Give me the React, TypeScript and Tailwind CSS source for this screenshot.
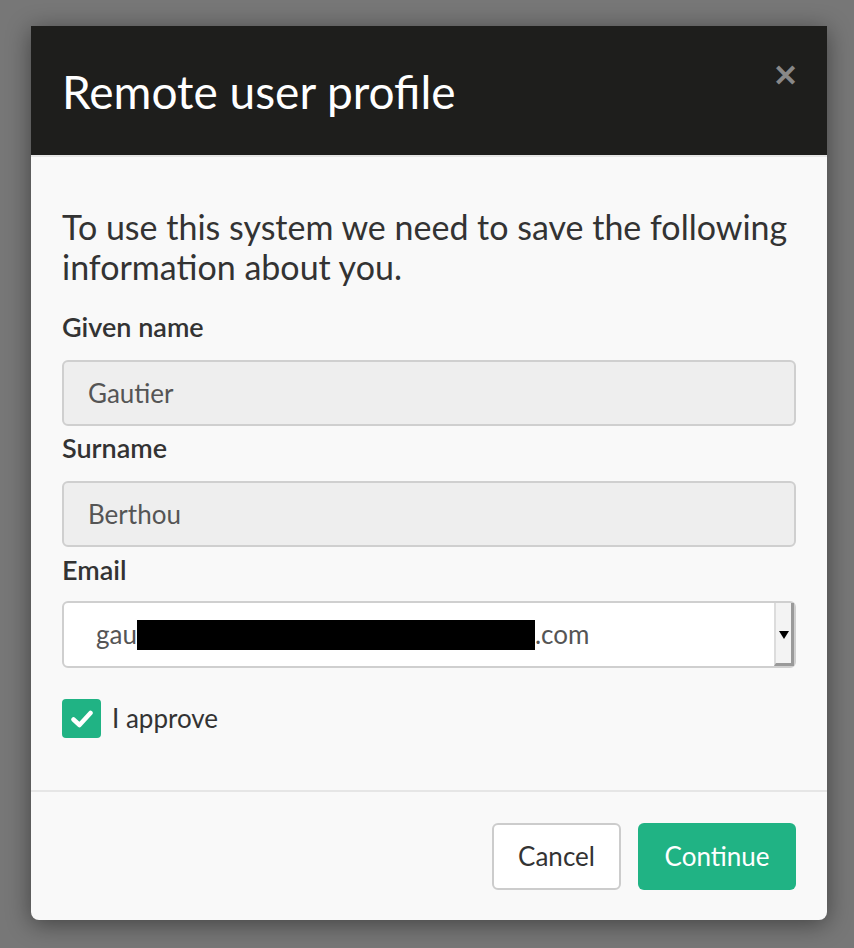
const font = { fontFamily: "Lato, 'Noto Sans', sans-serif" }

const Field = ({ label, value }: { label: string; value: string }) => {
  return (
    <div className="flex flex-col">
      <label className="text-[27px] leading-[32px] font-semibold text-[#333] mb-[17px]">{label}</label>
      <div className="h-[66px] rounded-[6px] border-2 border-[#cfcfcf] bg-[#eeeeee] flex items-center px-[24px] text-[26px] text-[#555]">
        {value}
      </div>
    </div>
  )
}

export default function App() {
  return (
    <div className="min-h-screen bg-[#777777] pt-[26px] pl-[31px]" style={font}>
      <div className="w-[796px] h-[894px] bg-[#f9f9f9] rounded-b-[8px] shadow-[0_4px_24px_rgba(0,0,0,0.45)] flex flex-col">
        <header className="h-[131px] bg-[#1e1e1c] flex items-center justify-between px-[31px] border-b-2 border-[#e6e6e6]">
          <h1 className="text-[46px] text-white font-normal pt-[2px]">Remote user profile</h1>
          <span className="text-[#888] text-[30px] font-bold leading-none -mt-[34px] -mr-[2px]">✕</span>
        </header>

        <div className="px-[31px] pt-[50px] flex flex-col">
          <p className="text-[34px] leading-[40px] text-[#333] mb-[24px]">
            To use this system we need to save the following information about you.
          </p>
          <Field label="Given name" value="Gautier" />
          <div className="h-[6px]" />
          <Field label="Surname" value="Berthou" />
          <div className="h-[7px]" />
          <div className="flex flex-col">
            <label className="text-[27px] leading-[32px] font-semibold text-[#333] mb-[15px]">Email</label>
            <div className="relative h-[67px] rounded-[6px] border-2 border-[#cfcfcf] bg-white flex items-center pl-[32px] text-[26px] text-[#555]">
              <span>gau</span>
              <span className="inline-block w-[398px] h-[30px] bg-black" />
              <span>.com</span>
              <div className="absolute right-0 top-0 bottom-0 w-[20px] bg-[#f3f3f3] border-l-2 border-[#dcdcdc] border-r-[3px] border-r-[#9a9a9a] border-b-[3px] border-b-[#9a9a9a] flex items-start justify-center pt-[28px]">
                <div className="w-0 h-0 border-l-[5px] border-r-[5px] border-t-[8px] border-l-transparent border-r-transparent border-t-black" />
              </div>
            </div>
          </div>
          <div className="flex items-center mt-[31px] gap-[11px]">
            <div className="w-[39px] h-[39px] rounded-[4px] bg-[#20b384] flex items-center justify-center">
              <svg width="22" height="18" viewBox="0 0 22 18">
                <path d="M2.5 9.5 L8.5 15 L19.5 3" stroke="white" strokeWidth="4.5" fill="none" strokeLinecap="round" strokeLinejoin="round" />
              </svg>
            </div>
            <span className="text-[26px] text-[#333]">I approve</span>
          </div>
        </div>

        <div className="mt-auto border-t-2 border-[#e6e6e6] h-[130px] flex items-center justify-end gap-[17px] px-[31px]">
          <button className="h-[67px] w-[129px] rounded-[6px] border-2 border-[#cccccc] bg-white text-[26px] text-[#333]">
            Cancel
          </button>
          <button className="h-[67px] w-[158px] rounded-[6px] bg-[#20b384] text-[26px] text-white">
            Continue
          </button>
        </div>
      </div>
    </div>
  )
}
